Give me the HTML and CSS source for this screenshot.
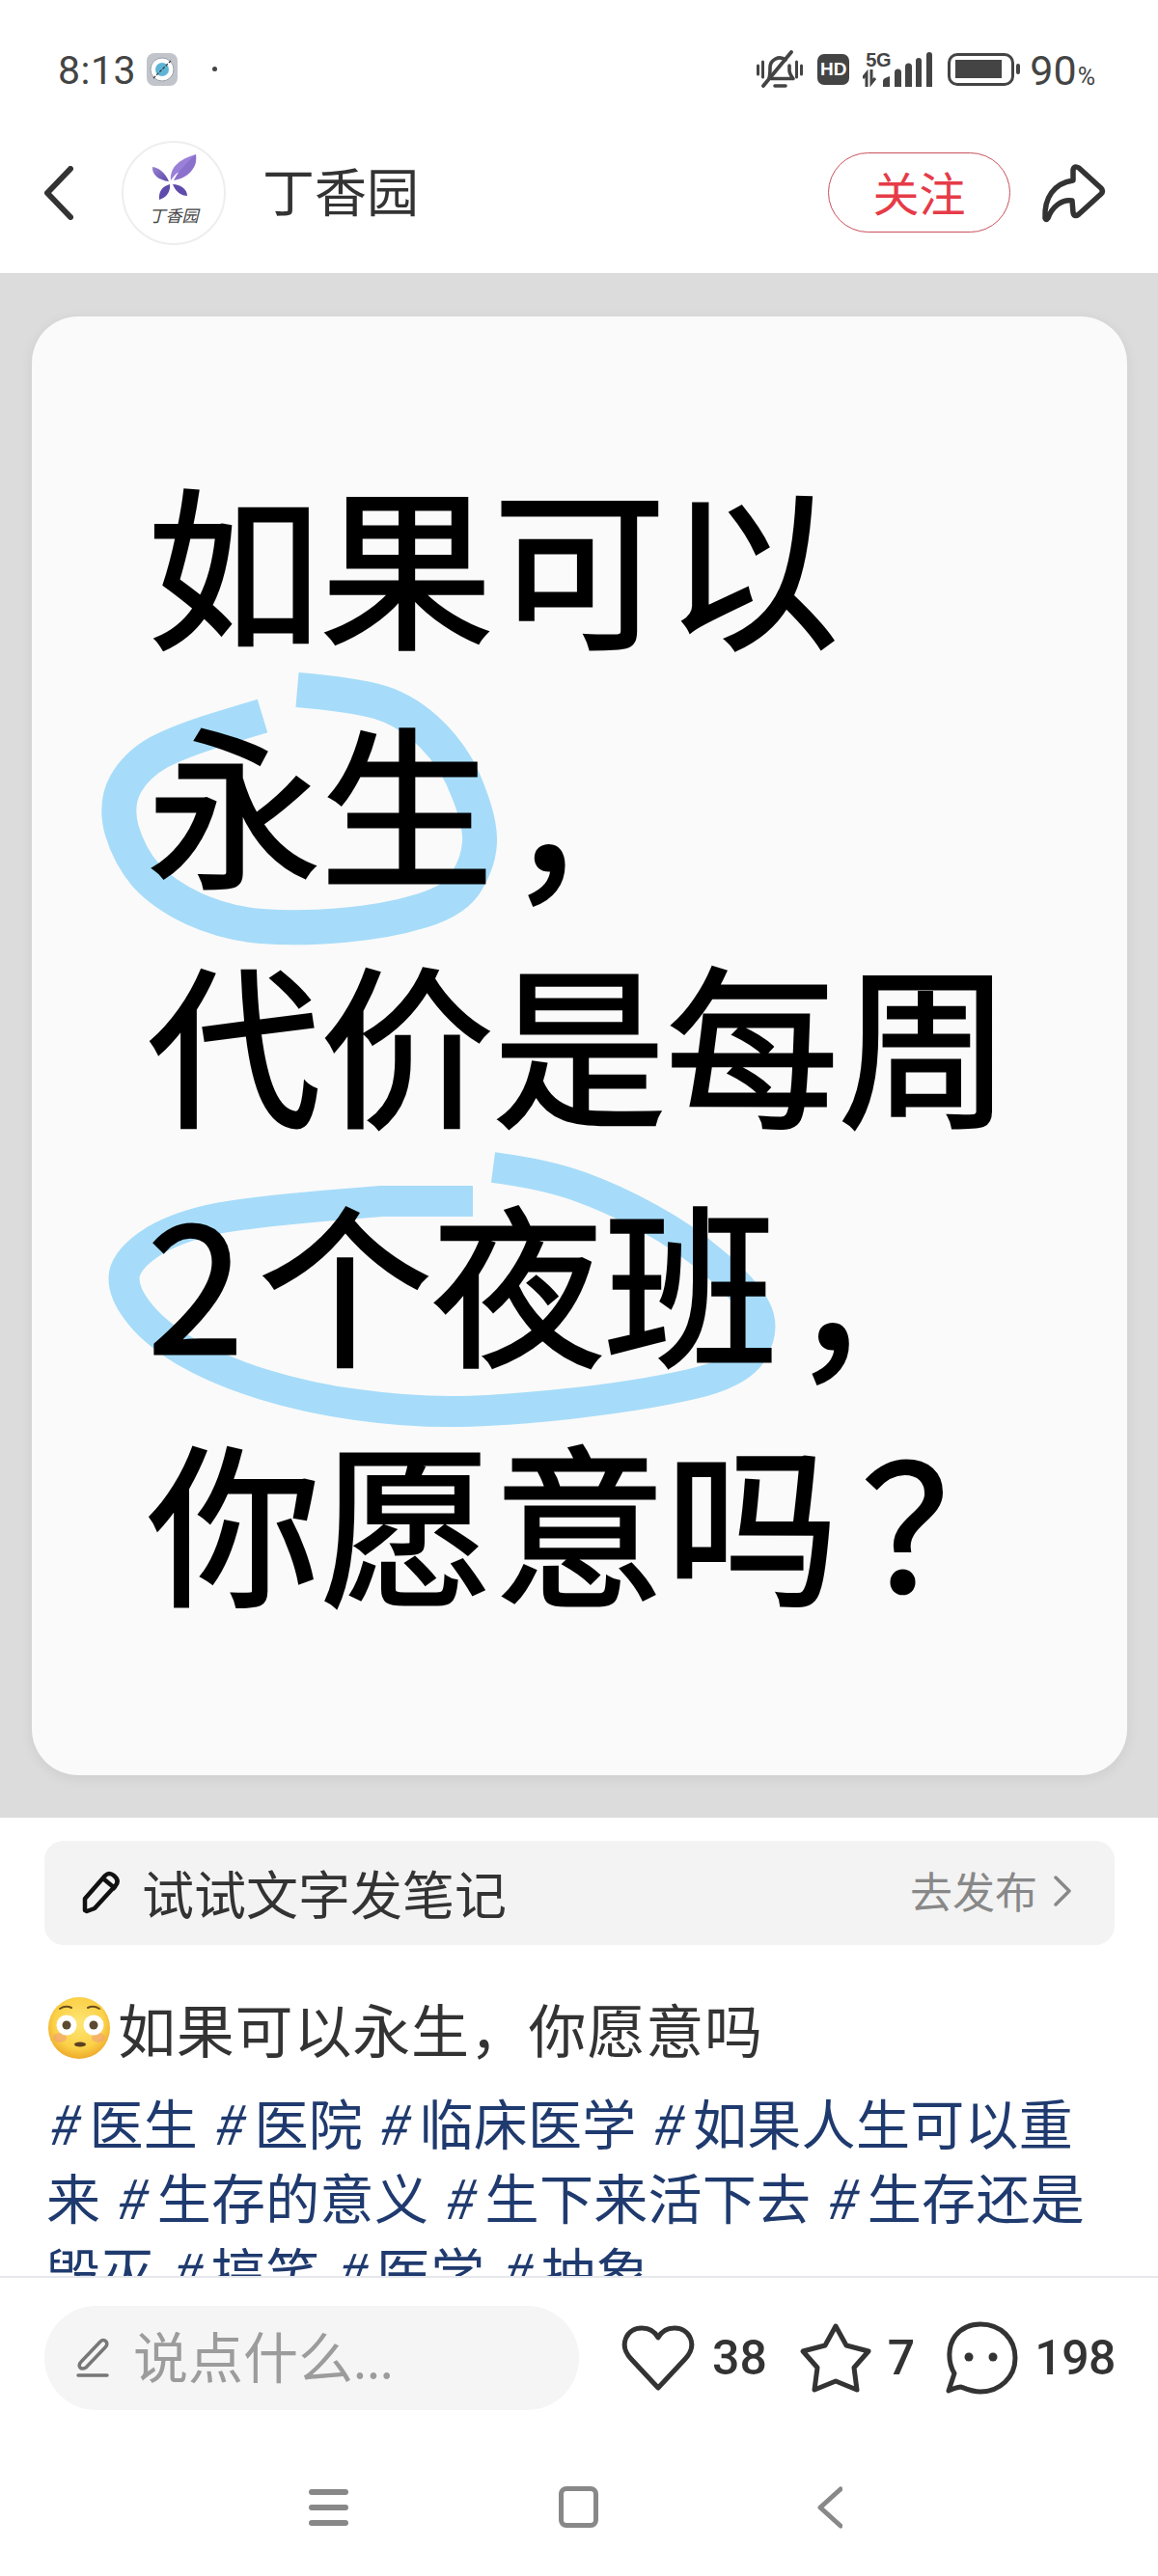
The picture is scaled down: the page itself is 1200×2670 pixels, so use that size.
FILE: index.html
```html
<!DOCTYPE html>
<html lang="zh">
<head>
<meta charset="utf-8">
<title>丁香园</title>
<link rel="stylesheet" href="styles.css">
</head>
<body>
<div class="page">
  <div class="status">
    <span class="time">8:13</span>
    <svg class="app-icon" viewBox="0 0 32 34"><rect width="32" height="34" rx="8" fill="#c1c4ca"/><circle cx="16" cy="17" r="12" fill="#fff" stroke="#9aa0a8" stroke-width="1"/><circle cx="16" cy="17" r="7" fill="#5fb4d6"/><path d="M7 26L25 8" stroke="#333" stroke-width="1.2" stroke-dasharray="3 1.5"/></svg>
    <span class="status-dot"></span>
    <span class="status-spacer"></span>
    <svg class="bell" viewBox="0 0 48 42" fill="none" stroke="#444" stroke-linecap="round" stroke-linejoin="round"><path d="M1.5 16v9M6.5 12v16M41.500 12v16M46.500 16v9" stroke-width="3"/><path d="M13 29c1-3 1-6 1-11a10 10 0 0 1 16-8M34 16v5c0 3 2 6 4 8.500H15M19 37h11" stroke-width="3.600"/><path d="M36 2L7 37" stroke-width="3.800"/></svg>
    <span class="hd">HD</span>
    <span class="signal">
      <span class="net">5G</span>
      <svg class="bars" viewBox="0 0 72 36"><path d="M4 36V22L0 27M9 18V32L13 27" fill="none" stroke="#444" stroke-width="3"/><path d="M21 36v-6q0-2 2-3l5-2v11zM33 36V21a3 3 0 0 1 7 0v15zM44 36V15a3 3 0 0 1 7 0v21zM55 36V9a3 3 0 0 1 6 0v27zM66 36V3a3 3 0 0 1 6 0v33z" fill="#444"/></svg>
    </span>
    <span class="battery"><span class="battery-fill"></span></span>
    <span class="battery-nub"></span>
    <span class="pct">90<small>%</small></span>
  </div>

  <header class="header">
    <svg class="back" viewBox="0 0 30 56" fill="none" stroke="#333" stroke-width="6" stroke-linecap="round" stroke-linejoin="round"><path d="M27 3L3 28l24 25"/></svg>
    <svg class="avatar" viewBox="126 145 108 108">
      <defs><linearGradient id="leaf" x1="0" y1="0" x2="1" y2="1"><stop offset="0" stop-color="#9b83d3"/><stop offset="1" stop-color="#5a48a8"/></linearGradient></defs>
      <circle cx="180" cy="199" r="53" fill="#fff" stroke="#eee" stroke-width="2"/>
      <path d="M177 186C176 172 186 164 203 159C205 172 198 180 184 178C181 180 179 183 177 186Z" fill="#9a80d8"/>
      <path d="M180 186C184 178 190 171 203 159C204 172 197 183 180 186Z" fill="#8b70cc"/>
      <path d="M175 187C171 178 165 173 158 172C157 180 165 186 175 187Z" fill="url(#leaf)"/>
      <path d="M176 190C168 192 164 198 165 206C172 204 177 198 176 190Z" fill="#5f4bab"/>
      <path d="M179 190C182 198 188 202 194 202C194 195 187 190 179 190Z" fill="#5f4bab"/>
      <text class="logo-text" x="180" y="229" text-anchor="middle">丁香园</text>
    </svg>
    <span class="name">丁香园</span>
    <span class="header-spacer"></span>
    <span class="follow">关注</span>
    <svg class="share" viewBox="1075 165 78 70" fill="none" stroke="#333" stroke-width="5.500" stroke-linejoin="round"><path d="M1083 226C1082 205 1092 190 1112 187L1112 176Q1113 171 1118 174L1141 195Q1144 198 1141 201L1118 222Q1113 226 1112 220L1111 208C1100 206 1090 215 1086 226Q1084 229 1083 226Z"/></svg>
  </header>

  <section class="hero">
    <div class="card">
      <svg class="scribble" viewBox="33 328 1135 1512" fill="none" stroke="#a6dcf9" stroke-linejoin="round">
        <path stroke-width="36" d="M272 742L226 756Q187 768 164 780Q141 793 130 813Q119 833 126 860Q134 887 151 907Q169 927 201 942Q234 957 271 960Q309 963 355 959Q401 955 437 944Q473 933 484 913Q496 893 497 873Q498 853 485 820Q473 787 448 762Q423 737 394 728Q366 720 308 715"/>
        <path stroke-width="32" d="M490 1245L395 1245Q395 1245 334 1250Q274 1255 230 1262Q187 1270 160 1286Q133 1303 129 1320Q126 1337 142 1358Q158 1380 191 1400Q225 1420 273 1435Q322 1450 370 1456Q419 1463 467 1463Q516 1463 589 1455Q662 1447 715 1435Q768 1423 780 1400Q793 1377 783 1357Q773 1337 741 1310Q710 1283 673 1263Q637 1243 601 1230Q565 1217 511 1210"/>
      </svg>
      <div class="poster">
        <p>如果可以</p>
        <p>永生<span class="comma">，</span></p>
        <p>代价是每周</p>
        <p><span class="digit">2</span>个夜班<span class="comma">，</span></p>
        <p>你愿意吗<span class="ask">？</span></p>
      </div>
    </div>
  </section>

  <main class="content">
    <div class="publish">
      <svg class="pen" viewBox="82 1938 42 46" fill="none" stroke="#111" stroke-width="4.500" stroke-linejoin="round"><path d="M86 1979L86 1967L107 1943Q111 1939 116 1943Q122 1948 118 1953L96 1977L88 1980Z"/><path d="M106 1947L118 1957"/></svg>
      <span class="publish-text">试试文字发笔记</span>
      <span class="publish-go">去发布</span>
      <svg class="go-arrow" viewBox="0 0 18 32" fill="none" stroke="#888" stroke-width="3.500" stroke-linecap="round" stroke-linejoin="round"><path d="M2 2l14 14L2 30"/></svg>
    </div>
    <h1 class="title">
      <svg class="emoji" viewBox="0 0 64 64">
        <defs>
          <radialGradient id="face" cx="50%" cy="42%" r="58%"><stop offset="0" stop-color="#fee675"/><stop offset="0.7" stop-color="#fbd148"/><stop offset="1" stop-color="#eeaa2a"/></radialGradient>
        </defs>
        <circle cx="32" cy="32" r="32" fill="url(#face)"/>
        <ellipse cx="12" cy="42" rx="7" ry="5" fill="#ee9a7f" opacity=".55"/>
        <ellipse cx="52" cy="42" rx="7" ry="5" fill="#ee9a7f" opacity=".55"/>
        <circle cx="19" cy="29" r="10.500" fill="#fff"/><circle cx="47" cy="29" r="10.500" fill="#fff"/>
        <circle cx="19" cy="29" r="4.500" fill="#5b4a32"/><circle cx="47" cy="29" r="4.500" fill="#5b4a32"/>
        <ellipse cx="33" cy="49" rx="6" ry="2.500" fill="#5b4022"/>
        <path d="M12 12q6-4 12-1M41 11q6-3 12 1" fill="none" stroke="#6a4d1e" stroke-width="2" stroke-linecap="round"/>
      </svg><span>如果可以永生，你愿意吗</span>
    </h1>
    <p class="tags"><span class="tag"><i>#</i>医生</span><span class="tag"><i>#</i>医院</span><span class="tag"><i>#</i>临床医学</span><span class="tag"><i>#</i>如果人生可以重来</span><span class="tag"><i>#</i>生存的意义</span><span class="tag"><i>#</i>生下来活下去</span><span class="tag"><i>#</i>生存还是毁灭</span><span class="tag"><i>#</i>搞笑</span><span class="tag"><i>#</i>医学</span><span class="tag"><i>#</i>抽象</span></p>
  </main>

  <footer class="bottom">
    <div class="input">
      <svg class="input-pen" viewBox="79 2424 34 42" fill="none" stroke="#777" stroke-linecap="round" stroke-linejoin="round"><path stroke-width="3.500" d="M84 2449L104 2428Q107 2425 110 2428Q112 2431 109 2434L89 2455Q85 2457 83 2455Q81 2452 84 2449Z"/><path stroke-width="3.500" d="M81 2463H111"/></svg>
      <span class="input-text">说点什么<small>...</small></span>
    </div>
    <div class="actions">
      <svg class="act-heart" viewBox="643 2411 78 71" fill="none" stroke="#333" stroke-width="5" stroke-linejoin="round"><path d="M682 2477L654 2447C640 2432 650 2415 665 2415C673 2415 679 2419 682 2425C685 2419 691 2415 699 2415C714 2415 724 2432 710 2447Z"/></svg>
      <span class="count c-like">38</span>
      <svg class="act-star" viewBox="827 2406 78 76" fill="none" stroke="#333" stroke-width="5" stroke-linejoin="round"><path d="M866 2411L877 2431L900 2437L885 2454L888 2477L866 2468L844 2477L847 2454L832 2437L855 2431Z"/></svg>
      <span class="count c-star">7</span>
      <svg class="act-chat" viewBox="979 2405 79 78" fill="none" stroke="#333" stroke-width="5" stroke-linejoin="round"><path d="M985 2478L991 2460C984 2448 984 2432 992 2421C1000 2411 1010 2409 1018 2409C1040 2409 1054 2425 1054 2444C1054 2464 1038 2479 1018 2479C1010 2479 1003 2476 998 2474C994 2474 990 2476 985 2478Z"/><circle cx="1006" cy="2443" r="4.500" fill="#333" stroke="none"/><circle cx="1031" cy="2443" r="4.500" fill="#333" stroke="none"/></svg>
      <span class="count c-chat">198</span>
    </div>
  </footer>

  <nav class="nav">
    <svg class="nav-menu" viewBox="0 0 41 38" fill="#888"><rect width="41" height="6" rx="3" y="0"/><rect width="41" height="6" rx="3" y="16"/><rect width="41" height="6" rx="3" y="32"/></svg>
    <span class="nav-home"></span>
    <svg class="nav-back" viewBox="0 0 26 44" fill="none" stroke="#888" stroke-width="5" stroke-linecap="round" stroke-linejoin="round"><path d="M24 3L3 22l21 19"/></svg>
  </nav>
</div>
</body>
</html>
```
FILE: styles.css
```css
* { box-sizing: border-box; }
html, body { margin: 0; padding: 0; background: #fff; }
body { font-family: "Noto Sans CJK SC", "Noto Sans", sans-serif; color: #333; }
.page { width: 1200px; height: 2670px; display: flex; flex-direction: column; overflow: hidden; background: #fff; }

/* status bar */
.status { height: 144px; flex: none; display: flex; align-items: flex-start; padding: 52px 65px 0 60px; color: #444; }
.time { font-family: Roboto, sans-serif; font-size: 41px; line-height: 42px; letter-spacing: .5px; width: 92px; }
.app-icon { width: 32px; height: 34px; margin-top: 3px; }
.status-dot { width: 5px; height: 5px; border-radius: 50%; background: #444; margin: 17px 0 0 36px; }
.status-spacer { flex: 1; }
.bell { width: 48px; height: 42px; margin-right: 15px; }
.hd { width: 33px; height: 32px; margin-top: 4px; margin-right: 14px; background: #444; color: #fff; border-radius: 7px; font: 700 19px/32px "Liberation Sans", sans-serif; text-align: center; }
.signal { position: relative; width: 72px; height: 36px; margin-right: 16px; margin-top: 2px; }
.net { position: absolute; left: 3px; top: -1px; font: 700 20px/18px "Liberation Sans", sans-serif; color: #444; letter-spacing: -.5px; }
.bars { position: absolute; left: 0; top: 0; width: 72px; height: 36px; }
.battery { width: 69px; height: 34px; margin-top: 3px; border: 3.500px solid #444; border-radius: 10px; padding: 4px 0 4px 5px; }
.battery-fill { display: block; width: 48px; height: 19px; background: #444; }
.battery-nub { width: 4px; height: 11px; background: #444; margin: 14px 0 0 2px; border-radius: 2px; }
.pct { font-family: Roboto, sans-serif; font-size: 43px; line-height: 42px; margin-left: 10px; }
.pct small { font-size: 25px; margin-left: 1px; }

/* header */
.header { height: 139px; flex: none; display: flex; align-items: center; padding: 0 47px 28px 46px; }
.back { width: 30px; height: 56px; margin-right: 50px; }
.avatar { width: 108px; height: 108px; margin-right: 38px; }
.logo-text { font-family: "Noto Sans CJK SC", sans-serif; font-size: 17px; font-style: italic; fill: #444; }
.name { font-size: 54px; line-height: 60px; color: #333; padding-bottom: 5px; }
.header-spacer { flex: 1; }
.follow { width: 189px; height: 83px; border: 1.500px solid #c9505c; border-radius: 42px; color: #e63b48; font-size: 48px; line-height: 78px; text-align: center; margin-right: 28px; }
.share { width: 78px; height: 70px; }

/* hero */
.hero { height: 1601px; flex: none; background: #dcdcdc; padding: 45px 32px 44px 33px; }
.card { position: relative; height: 1512px; background: #fafafa; border-radius: 48px; box-shadow: 0 3px 14px rgba(0,0,0,.07); padding: 129px 0 0 120px; }
.scribble { position: absolute; left: 0; top: 0; width: 100%; height: 100%; }
.poster { position: relative; color: #000; font-size: 179px; font-weight: 400; line-height: 248px; -webkit-text-stroke: 3px #000; }
.poster p { margin: 0; height: 248px; white-space: nowrap; }
.digit { margin-right: 16px; }
.comma { margin-left: 14px; vertical-align: -12px; }
.ask { margin-left: 24px; }

/* content */
.content { flex: 1; min-height: 0; overflow: hidden; padding: 24px 45px 0 46px; }
.publish { height: 108px; display: flex; align-items: center; background: #f3f3f3; border-radius: 20px; padding: 0 45px 0 38px; }
.pen { width: 42px; height: 46px; margin-right: 21px; }
.publish-text { flex: 1; font-size: 54px; line-height: 60px; color: #333; }
.publish-go { font-size: 44px; line-height: 50px; color: #888; margin-right: 17px; padding-bottom: 6px; }
.go-arrow { width: 18px; height: 32px; margin-bottom: 4px; }
.title { margin: 52px 0 0 4px; display: flex; align-items: center; height: 68px; font-size: 60px; font-weight: 400; color: #333; line-height: 68px; letter-spacing: .8px; }
.emoji { width: 64px; height: 64px; margin-right: 8px; flex: none; }
.tags { margin: 24px 0 0 2px; font-size: 56px; line-height: 77px; color: #1f3a6e; width: 1110px; letter-spacing: .3px; }
.tag { margin-right: 14px; }
.tag i { font-style: italic; font-family: "Noto Sans CJK SC", sans-serif; margin-right: 13px; }

/* bottom bar */
.bottom { height: 181px; flex: none; border-top: 2px solid #e6e8ec; background: #fff; display: flex; align-items: flex-start; padding: 29px 48px 0 46px; }
.input { width: 554px; height: 108px; background: #f5f5f5; border-radius: 54px; display: flex; align-items: center; padding: 0 0 6px 33px; flex: none; }
.input-pen { width: 34px; height: 42px; margin: 6px 25px 0 0; }
.input-text { font-size: 57px; line-height: 66px; color: #9c9c9c; }
.input-text small { font-size: 50px; }
.actions { display: flex; align-items: center; height: 108px; margin-left: 43px; margin-top: 0; }
.act-heart { width: 78px; height: 71px; }
.act-star { width: 78px; height: 76px; margin-left: 32px; }
.act-chat { width: 79px; height: 78px; margin-left: 29px; }
.count { font-family: Roboto, sans-serif; font-size: 50px; font-weight: 500; line-height: 60px; color: #333; margin-left: 17px; }
.c-star { margin-left: 15px; }
.c-chat { letter-spacing: -.5px; margin-left: 16px; }

/* nav */
.nav { height: 130px; flex: none; display: flex; align-items: flex-start; padding: 39px 0 0 320px; }
.nav-menu { width: 41px; height: 38px; margin-top: 1px; }
.nav-home { width: 41px; height: 43px; border: 5px solid #888; border-radius: 8px; margin-left: 218px; margin-top: -2px; }
.nav-back { width: 26px; height: 44px; margin-left: 227px; margin-top: -2px; }
```
